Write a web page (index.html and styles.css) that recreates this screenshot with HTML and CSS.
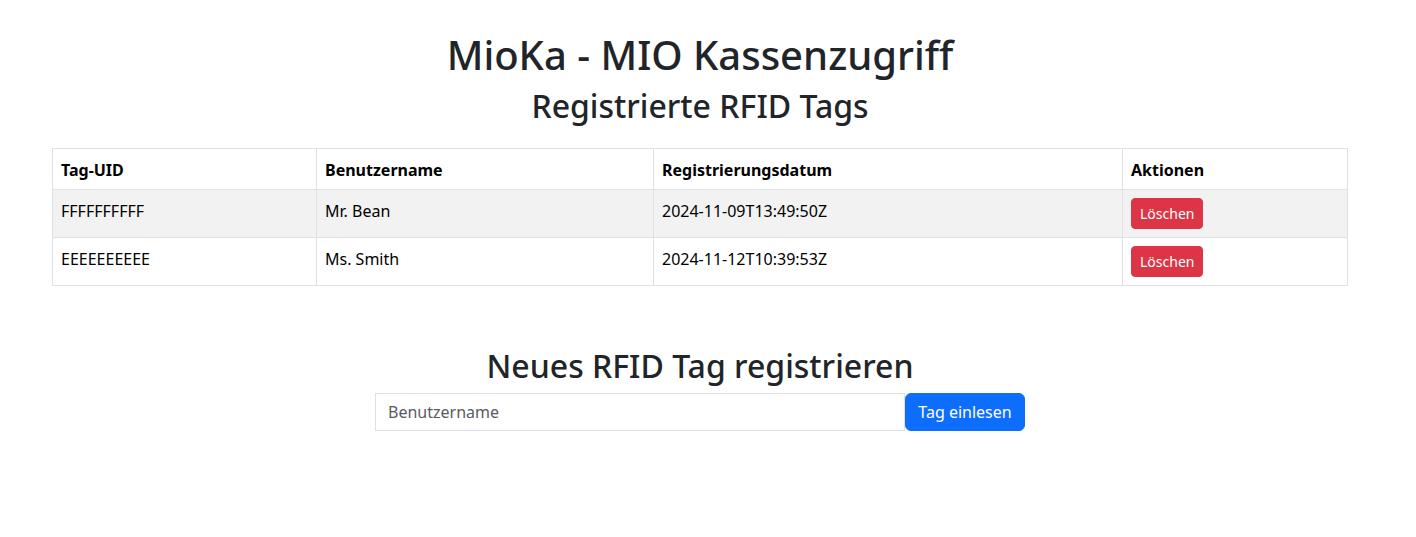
FILE: index.html
```html
<!DOCTYPE html>
<html lang="de">
<head>
<meta charset="utf-8">
<title>MioKa - MIO Kassenzugriff</title>
<link rel="stylesheet" href="styles.css">
</head>
<body>
<div class="page">
  <div class="container">
    <h1 class="title">MioKa - MIO Kassenzugriff</h1>
    <h2 class="subtitle">Registrierte RFID Tags</h2>
    <table class="tags">
      <thead>
        <tr>
          <th class="c1">Tag-UID</th>
          <th class="c2">Benutzername</th>
          <th class="c3">Registrierungsdatum</th>
          <th class="c4">Aktionen</th>
        </tr>
      </thead>
      <tbody>
        <tr class="odd">
          <td>FFFFFFFFFF</td>
          <td>Mr. Bean</td>
          <td>2024-11-09T13:49:50Z</td>
          <td><button class="btn-delete">Löschen</button></td>
        </tr>
        <tr>
          <td>EEEEEEEEEE</td>
          <td>Ms. Smith</td>
          <td>2024-11-12T10:39:53Z</td>
          <td><button class="btn-delete">Löschen</button></td>
        </tr>
      </tbody>
    </table>

    <h2 class="section">Neues RFID Tag registrieren</h2>
    <form class="register">
      <input class="name-input" type="text" placeholder="Benutzername">
      <button type="button" class="btn-read">Tag einlesen</button>
    </form>
  </div>
</div>
</body>
</html>
```

FILE: styles.css
```css
* { box-sizing: border-box; }
html, body { margin: 0; padding: 0; background: #fff; }
body {
  font-family: "Noto Sans", "Liberation Sans", sans-serif;
  font-size: 16px;
  line-height: 1.5;
  color: #212529;
}
.page { width: 1400px; }
.container {
  max-width: 1320px;
  margin: 0 auto;
  padding: 31px 12px 0;
}
.title {
  margin: 0 0 8px;
  font-size: 40px;
  font-weight: 500;
  line-height: 1.2;
  text-align: center;
}
.subtitle, .section {
  margin: 0 0 8px;
  font-size: 32px;
  font-weight: 500;
  line-height: 1.2;
  text-align: center;
}
.tags {
  width: 100%;
  margin: 23px 0 0;
  border-collapse: collapse;
  color: #000;
  border: 1px solid #dee2e6;
}
.tags th, .tags td {
  border: 1px solid #dee2e6;
  padding: 9px 8px 7px;
  text-align: left;
  vertical-align: top;
}
.tags th { font-weight: 700; }
.tags .c1 { width: 264px; }
.tags .c2 { width: 337px; }
.tags .c3 { width: 469px; }
.tags .odd td { background: #f2f2f2; }
.btn-delete {
  display: inline-block;
  font-family: inherit;
  font-size: 14px;
  line-height: 1.5;
  padding: 4px 8px;
  margin-top: -1px;
  margin-bottom: 1px;
  color: #fff;
  background: #dc3545;
  border: 1px solid #dc3545;
  border-radius: 4px;
}
.section { margin-top: 61px; }
.register {
  display: flex;
  justify-content: center;
  margin: 0;
  margin-top: -1px;
}
.name-input {
  width: 530px;
  height: 38px;
  padding: 6px 12px;
  font-family: inherit;
  font-size: 16px;
  line-height: 1.5;
  color: #212529;
  border: 1px solid #dee2e6;
  border-radius: 0;
  outline: none;
}
.name-input::placeholder { color: #595c5f; opacity: 1; }
.btn-read {
  width: 120px;
  height: 38px;
  padding: 6px 12px;
  font-family: inherit;
  font-size: 16px;
  line-height: 1.5;
  color: #fff;
  background: #0d6efd;
  border: 1px solid #0d6efd;
  border-radius: 6px;
}
```
